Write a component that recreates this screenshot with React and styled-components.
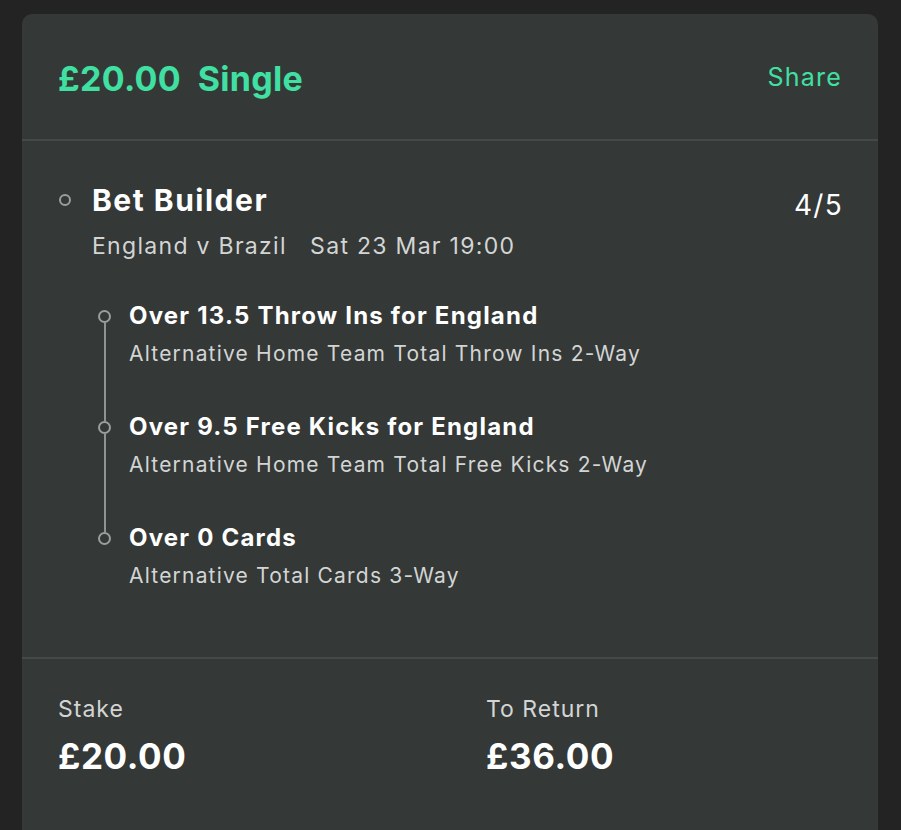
import React from 'react'
import styled, { createGlobalStyle } from 'styled-components'

const legs = [
  { title: 'Over 13.5 Throw Ins for England', market: 'Alternative Home Team Total Throw Ins 2-Way' },
  { title: 'Over 9.5 Free Kicks for England', market: 'Alternative Home Team Total Free Kicks 2-Way' },
  { title: 'Over 0 Cards', market: 'Alternative Total Cards 3-Way' }
]

const GlobalStyle = createGlobalStyle`
  html, body {
    margin : 0;
    background : #232323;
    font-family : Inter, "Noto Sans", sans-serif;
    -webkit-font-smoothing : antialiased;
  }
  body {
    height : 830px;
    overflow : hidden;
  }
`

const App = () => {
  return (
    <>
      <GlobalStyle />
      <Page>
        <Card>
          <Header>
            <HeaderTitle>£20.00&nbsp;&nbsp;Single</HeaderTitle>
            <ShareLink>Share</ShareLink>
          </Header>

          <Body>
            <BetRow>
              <BetMarker>
                <Dot size={12} />
              </BetMarker>
              <BetInfo>
                <BetTitle>Bet Builder</BetTitle>
                <BetMeta>England v Brazil&nbsp;&nbsp;&nbsp;Sat 23 Mar 19:00</BetMeta>
              </BetInfo>
              <Odds>4/5</Odds>
            </BetRow>

            <LegList>
              {legs.map((leg, i) => {
                const last = i === legs.length - 1
                return (
                  <Leg key={leg.title}>
                    <LegMarker>
                      <Dot size={13} />
                      {!last && <Line />}
                    </LegMarker>
                    <LegInfo last={last}>
                      <LegTitle>{leg.title}</LegTitle>
                      <LegMarket>{leg.market}</LegMarket>
                    </LegInfo>
                  </Leg>
                )
              })}
            </LegList>
          </Body>

          <Footer>
            <Summary>
              <SummaryLabel>Stake</SummaryLabel>
              <SummaryValue>£20.00</SummaryValue>
            </Summary>
            <Summary>
              <SummaryLabel>To Return</SummaryLabel>
              <SummaryValue>£36.00</SummaryValue>
            </Summary>
          </Footer>
        </Card>
      </Page>
    </>
  )
}

const Page = styled.div`
  padding : 14px 23px 0 22px;
  height : 816px;
`;

const Card = styled.div`
  background : #343837;
  border-radius : 10px 10px 0 0;
  height : 100%;
  display : flex;
  flex-direction : column;
`;

const Header = styled.div`
  display : flex;
  align-items : center;
  justify-content : space-between;
  height : 125px;
  padding : 0 36px;
  border-bottom : 2px solid #454948;
`;

const HeaderTitle = styled.div`
  color : #40e0a2;
  font-size : 34px;
  font-weight : 700;
  letter-spacing : 0.3px;
  margin-top : 4px;
`;

const ShareLink = styled.div`
  color : #40e0a2;
  font-size : 25px;
  font-weight : 400;
  letter-spacing : 1.2px;
`;

const Body = styled.div`
  padding : 41px 36px 67px 36px;
  border-bottom : 2px solid #454948;
`;

const BetRow = styled.div`
  display : flex;
  align-items : flex-start;
`;

const BetMarker = styled.div`
  width : 34px;
  height : 36px;
  display : flex;
  align-items : center;
  padding-left : 1px;
`;

const Dot = styled.span`
  display : block;
  box-sizing : border-box;
  width : ${p => p.size}px;
  height : ${p => p.size}px;
  border : 2px solid #9a9e9c;
  border-radius : 50%;
  flex-shrink : 0;
`;

const BetInfo = styled.div`
  flex : 1;
`;

const BetTitle = styled.div`
  color : #fff;
  font-size : 30px;
  line-height : 36px;
  font-weight : 700;
  letter-spacing : 1.5px;
  margin-left : -1px;
`;

const BetMeta = styled.div`
  margin-top : 13px;
  color : #d3d5d4;
  font-size : 23px;
  line-height : 30px;
  letter-spacing : 1.3px;
  margin-left : -1px;
`;

const Odds = styled.div`
  color : #fff;
  font-size : 28px;
  line-height : 36px;
  margin-top : 5px;
  letter-spacing : 1.3px;
  margin-right : -1px;
`;

const LegList = styled.div`
  margin-top : 40px;
  padding-left : 40px;
`;

const Leg = styled.div`
  display : flex;
`;

const LegMarker = styled.div`
  width : 13px;
  margin-right : 18px;
  display : flex;
  flex-direction : column;
  align-items : center;
  padding-top : 9px;
`;

const Line = styled.div`
  width : 2px;
  flex : 1;
  background : #8f9391;
  margin-bottom : -9px;
`;

const LegInfo = styled.div`
  padding-bottom : ${p => (p.last ? 0 : 44)}px;
`;

const LegTitle = styled.div`
  color : #fff;
  font-size : 24px;
  line-height : 30px;
  font-weight : 700;
  letter-spacing : 1.2px;
`;

const LegMarket = styled.div`
  margin-top : 9px;
  color : #d3d5d4;
  font-size : 21px;
  line-height : 28px;
  letter-spacing : 1.2px;
`;

const Footer = styled.div`
  flex : 1;
  display : grid;
  grid-template-columns : 1fr 1fr;
  align-content : start;
`;

const Summary = styled.div`
  padding : 35px 36px 0 36px;
`;

const SummaryLabel = styled.div`
  color : #d3d5d4;
  font-size : 23px;
  line-height : 30px;
  letter-spacing : 1px;
`;

const SummaryValue = styled.div`
  margin-top : 12px;
  color : #fff;
  font-size : 35px;
  line-height : 40px;
  font-weight : 700;
  letter-spacing : 0.6px;
`;

export default App
